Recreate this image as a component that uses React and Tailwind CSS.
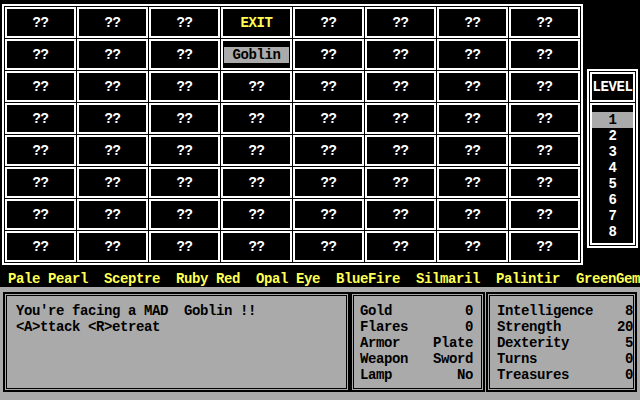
import React from 'react';

const font = { fontFamily: '"Liberation Mono", "DejaVu Sans Mono", monospace' };

const filas = Array.from({ length: 8 }, (_, r) =>
  Array.from({ length: 8 }, (_, c) => {
    if (r === 0 && c === 3) return 'exit';
    if (r === 1 && c === 3) return 'goblin';
    return 'unknown';
  })
);

const tesoros = ' Pale Pearl  Sceptre  Ruby Red  Opal Eye  BlueFire  Silmaril  Palintir  GreenGem';

const inventario = [
  ['Gold', '0'],
  ['Flares', '0'],
  ['Armor', 'Plate'],
  ['Weapon', 'Sword'],
  ['Lamp', 'No'],
];

const atributos = [
  ['Intelligence', '8'],
  ['Strength', '20'],
  ['Dexterity', '5'],
  ['Turns', '0'],
  ['Treasures', '0'],
];

function Celda({ tipo }) {
  return (
    <div className="w-[71px] h-[31px] border-2 border-white bg-black flex items-center justify-center">
      {tipo === 'exit' && <span className="text-[#ffff55]">EXIT</span>}
      {tipo === 'goblin' && (
        <span className="w-[65px] h-4 bg-[#aaaaaa] text-black flex items-center justify-center">Goblin</span>
      )}
      {tipo === 'unknown' && <span className="text-white">??</span>}
    </div>
  );
}

function Panel({ className, children }) {
  return (
    <div className={`border-2 border-black p-px h-[100px] ${className}`}>
      <div className="border border-black h-full">{children}</div>
    </div>
  );
}

export default function App() {
  return (
    <div
      className="w-[640px] h-[400px] bg-black overflow-hidden text-[14px] leading-4 font-bold tracking-[-0.4px] whitespace-pre"
      style={font}
    >
      <div className="flex h-[265px]">
        <div className="ml-[2px] mt-[4px] self-start border-2 border-white p-px">
          <div className="grid grid-cols-[repeat(8,71px)] gap-px">
            {filas.flat().map((tipo, i) => (
              <Celda key={i} tipo={tipo} />
            ))}
          </div>
        </div>

        <div className="ml-[4px] mt-[69px] self-start w-[51px] border-2 border-white p-px flex flex-col gap-px">
          <div className="h-[30px] border-2 border-white flex items-center justify-center text-white">LEVEL</div>
          <div className="h-[142px] border-2 border-white pt-[7px] flex flex-col items-center">
            {[1, 2, 3, 4, 5, 6, 7, 8].map((n) => (
              <div
                key={n}
                className={`w-full h-4 flex items-center justify-center ${n === 1 ? 'bg-[#aaaaaa] text-black' : 'text-white'}`}
              >
                {n}
              </div>
            ))}
          </div>
        </div>
      </div>

      <div className="h-[22px] pt-[6px] text-[#ffff55]">{tesoros}</div>

      <div className="h-[113px] bg-[#aaaaaa] pt-[5px] pl-[3px] flex text-black">
        <Panel className="w-[347px]">
          <div className="pl-[9px] pt-[7px]">
            <div>You're facing a MAD  Goblin !!</div>
            <div>&lt;A&gt;ttack &lt;R&gt;etreat</div>
          </div>
        </Panel>
        <Panel className="w-[135px]">
          <div className="pl-[6px] pr-[8px] pt-[7px]">
            {inventario.map(([k, v]) => (
              <div key={k} className="flex justify-between">
                <span>{k}</span>
                <span>{v}</span>
              </div>
            ))}
          </div>
        </Panel>
        <Panel className="w-[151px] ml-px">
          <div className="pl-[7px] pt-[7px]">
            {atributos.map(([k, v]) => (
              <div key={k} className="flex justify-between">
                <span>{k}</span>
                <span>{v}</span>
              </div>
            ))}
          </div>
        </Panel>
      </div>
    </div>
  );
}
